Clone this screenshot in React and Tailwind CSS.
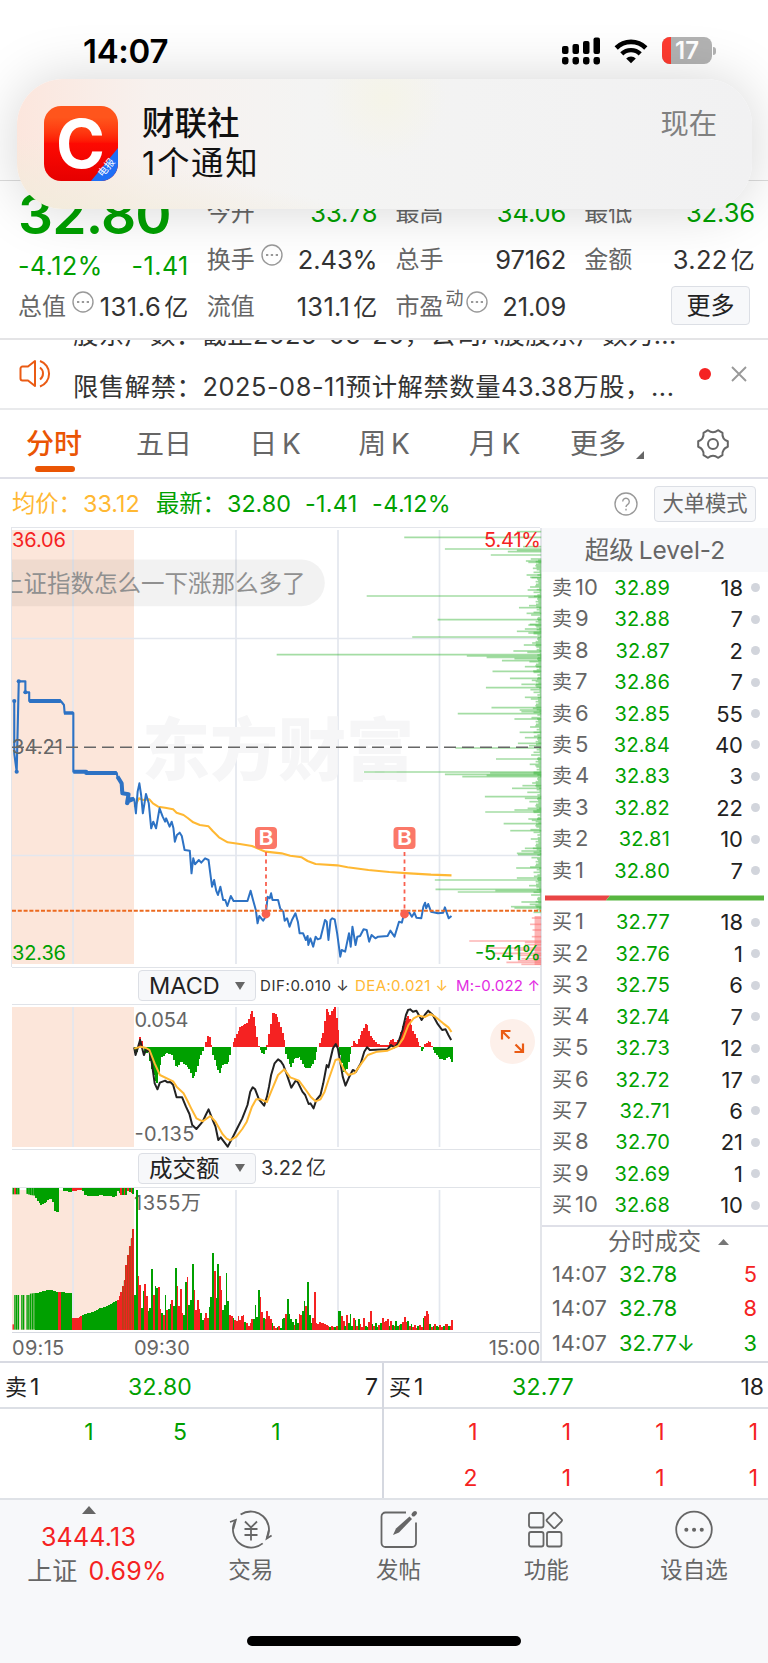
import clsx from 'clsx'

const tabs = [
  { label: '五日', width: 'w-[112px]' },
  { label: '日 K', width: 'w-[110px]' },
  { label: '周 K', width: 'w-[108px]' },
  { label: '月 K', width: 'w-[113px]' },
]

const sellOrders = [
  ['卖10', '32.89', 18],
  ['卖9', '32.88', 7],
  ['卖8', '32.87', 2],
  ['卖7', '32.86', 7],
  ['卖6', '32.85', 55],
  ['卖5', '32.84', 40],
  ['卖4', '32.83', 3],
  ['卖3', '32.82', 22],
  ['卖2', '32.81', 10],
  ['卖1', '32.80', 7],
]

const buyOrders = [
  ['买1', '32.77', 18],
  ['买2', '32.76', 1],
  ['买3', '32.75', 6],
  ['买4', '32.74', 7],
  ['买5', '32.73', 12],
  ['买6', '32.72', 17],
  ['买7', '32.71', 6],
  ['买8', '32.70', 21],
  ['买9', '32.69', 1],
  ['买10', '32.68', 10],
]

const trades = [
  { time: '14:07', price: '32.78', volume: 5, up: true },
  { time: '14:07', price: '32.78', volume: 8, up: true },
  { time: '14:07', price: '32.77↓', volume: 3, up: false },
]

// Series are stored in chart units; every chart group scales them down to pixels.
const UNIT_X = 2.877
const UNIT_Y = 3
const MINUTE = 4.88
const OPEN_X = 386

const auctionLine =
  '41,693 41,850 48,905 54,634 73,634 73,667 84,667 84,693 175,693 184,705 186,729 211,729 211,905 248,905 248,909 336,909 338,922 345,930 350,945 349,960 356,972 368,972 366,1000 370,985 386,985'

const priceLine =
  '386,985 391,1030 396,965 401,940 406,975 411,1030 420,972 428,1000 435,1075 441,1055 449,1075 459,1015 468,1040 475,1055 478,1045 488,1070 494,1055 499,1075 503,1115 509,1095 517,1088 523,1098 531,1140 546,1142 551,1210 556,1165 561,1183 572,1170 579,1178 590,1165 600,1170 605,1210 610,1250 616,1230 622,1262 627,1275 634,1250 642,1290 648,1290 654,1308 664,1278 672,1293 712,1293 721,1262 728,1290 736,1320 741,1360 746,1338 757,1352 764,1340 770,1280 776,1285 780,1270 784,1290 800,1290 806,1315 815,1325 819,1352 826,1345 833,1370 840,1350 850,1330 857,1355 862,1390 872,1390 880,1410 885,1398 887,1425 893,1405 901,1430 908,1400 914,1408 922,1405 935,1350 940,1355 945,1410 951,1350 956,1345 963,1348 970,1390 979,1460 983,1440 993,1445 1004,1390 1009,1430 1014,1370 1023,1425 1028,1400 1036,1398 1046,1378 1055,1380 1062,1415 1069,1395 1080,1405 1088,1400 1115,1398 1123,1382 1135,1400 1148,1355 1156,1358 1163,1330 1178,1328 1185,1340 1192,1328 1198,1343 1212,1345 1218,1310 1223,1298 1226,1315 1232,1302 1240,1325 1260,1330 1275,1328 1280,1312 1291,1345 1299,1338'

const averageLine =
  '387,1010 400,985 411,990 430,988 440,1000 455,1010 475,1013 498,1018 508,1028 528,1035 540,1044 556,1057 575,1065 600,1069 612,1083 630,1102 655,1117 690,1122 725,1128 764,1145 810,1150 835,1157 868,1162 885,1173 908,1182 970,1186 1000,1192 1060,1200 1120,1206 1178,1210 1240,1214 1299,1216'

const difLine =
  '386,262 390,285 397,262 403,240 414,285 420,270 430,275 437,310 445,370 453,388 460,368 475,362 482,367 490,366 498,374 508,412 524,412 535,440 545,462 553,495 565,507 583,485 592,465 600,448 612,480 620,500 628,540 635,532 655,560 668,535 680,510 697,475 712,435 720,395 727,382 734,388 745,418 760,437 768,410 774,380 780,345 790,310 800,298 808,304 815,315 824,340 838,383 850,363 856,365 870,395 878,405 888,432 893,430 902,445 910,420 922,405 930,370 940,315 945,322 958,265 966,252 972,265 978,300 986,350 994,377 1005,350 1015,330 1024,335 1038,310 1048,275 1056,262 1064,270 1115,268 1125,255 1135,262 1145,250 1158,210 1168,165 1174,150 1180,148 1188,155 1198,152 1213,180 1222,165 1232,152 1245,165 1258,190 1272,210 1282,208 1290,225 1298,240'

const deaLine =
  '386,266 405,260 420,264 430,270 445,310 460,345 498,364 508,380 528,400 540,424 550,445 565,475 583,484 605,468 620,485 640,522 652,536 662,541 680,530 697,507 710,485 725,440 737,418 750,418 768,426 780,395 800,345 818,328 835,352 860,362 880,390 895,412 908,424 922,418 934,395 945,360 965,300 975,297 990,330 1002,345 1020,340 1040,310 1058,285 1085,275 1115,272 1145,258 1160,235 1175,195 1190,175 1205,167 1222,171 1238,162 1252,170 1275,190 1290,202 1299,216'

const macdKeys = [
  [386, -10], [391, -25], [396, 5], [402, 33], [408, 18], [414, -5], [420, -25], [426, -5], [432, -40], [438, -70],
  [450, -115], [458, -70], [465, -30], [480, -17], [495, -22], [505, -55], [512, -60], [522, -40], [535, -55], [545, -65],
  [555, -95], [565, -70], [575, -30], [585, -8], [590, 5], [600, 42], [606, 15], [612, -20], [625, -65], [632, -76],
  [640, -52], [655, -50], [662, -20], [668, 10], [690, 60], [712, 75], [724, 112], [732, 80], [742, 15], [746, -3],
  [758, -22], [768, 2], [772, 30], [784, 107], [796, 97], [808, 60], [818, 20], [822, -20], [836, -62], [848, -32],
  [862, -30], [876, -60], [890, -64], [904, -45], [912, -5], [918, 8], [930, 45], [940, 118], [948, 95], [956, 112],
  [964, 120], [974, 50], [978, -20], [990, -82], [1000, -60], [1010, -8], [1016, 20], [1026, 8], [1040, 45], [1054, 74],
  [1066, 35], [1085, 12], [1095, 6], [1115, 8], [1128, 28], [1136, 12], [1150, 30], [1162, 75], [1175, 97], [1188, 50],
  [1200, 25], [1208, 3], [1214, -14], [1222, 8], [1234, 22], [1242, 3], [1250, -15], [1265, -35], [1280, -38], [1290, -28],
  [1305, -50],
]

// One entry per minute from the open, negative when the minute closed lower.
const volumes = [
  -103, -419, 162, 133, -65, -115, 137, 100, -55, -65, -183, 103, -130, -125, 127, 62, -50, 45, -104, 60, -62, -78, 90, -70,
  -184, 130, 72, 122, 50, -45, -142, 158, -75, -88, -197, 118, 60, 88, 62, -50, -30, 35, 50, 35, -67, -97, -231, 177, -95,
  -198, 160, 118, -58, -75, -170, -85, 44, 40, -36, 28, 25, 42, 28, 42, 44, -22, 20, 10, 20, 32, -33, -73, -37, -120, 98, 52,
  -35, 33, 55, 40, 32, -20, 12, 6, -8, 10, -5, -33, -34, 47, -93, -48, -32, -24, 14, -32, -20, 48, 44, -55, -86, 70, -144,
  -45, -20, 36, 114, 20, 17, 22, 20, 20, 18, 15, 10, -8, 11, 8, -8, 12, -57, -57, 42, 25, -12, 44, -20, -48, -12, 35, -30, 12,
  -33, 18, 8, 35, -12, -8, 24, 55, -18, 12, -20, -8, 14, -20, 36, 22, 26, 33, -10, 26, -14, 12, -26, -12, 14, -18, 24, 37, 22,
  -26, 12, -18, 8, 14, 6, -12, 14, 8, -34, 40, 57, 48, -16, 8, -12, 18, -12, -8, 14, 8, -12, 18, 16, -12, 10, 30, 6,
]

const depthBars = [
  [185, 1487], [202, 1163], [230, 1505], [237, 1280], [241, 1487], [245, 1461], [255, 1412], [273, 1513], [277, 1520],
  [315, 1515], [322, 1525], [360, 1518], [378, 1055], [382, 1520], [413, 1493], [430, 1515], [449, 1259], [465, 1520],
  [477, 1510], [484, 1487], [489, 1520], [501, 1186], [525, 1507], [543, 1477], [554, 796], [558, 1343], [562, 1400],
  [566, 1480], [572, 1444], [590, 1510], [604, 1417], [625, 1467], [643, 1500], [653, 1398], [682, 1510], [713, 1414],
  [720, 1495], [725, 1500], [731, 1317], [747, 1480], [787, 1495], [803, 1510], [820, 1490], [834, 1310], [867, 1427],
  [906, 1047], [909, 1410], [913, 1280], [916, 1400], [920, 1330], [947, 1503], [955, 1473], [980, 1395], [985, 1510],
  [1015, 1518], [1020, 1480], [1026, 1396], [1047, 1520], [1061, 1449], [1082, 1468], [1135, 1510], [1143, 1500],
  [1150, 1487], [1154, 1490], [1194, 1485], [1224, 1487], [1230, 1251], [1258, 1253], [1262, 1425], [1266, 1317],
  [1296, 1500], [1310, 1470], [1314, 1480],
]

const depthBarsBelow = [
  [1344, 1530], [1363, 1525], [1380, 1532], [1400, 1530], [1413, 1350], [1417, 1510], [1424, 1510], [1434, 1397],
  [1440, 1480], [1450, 1420], [1456, 1490], [1466, 1500], [1472, 1490], [1477, 1457], [1483, 1500],
]

function interpolate(keys, x) {
  const next = keys.findIndex(([kx]) => kx >= x)
  if (next <= 0) return keys[Math.max(next, 0)][1]
  const [x0, y0] = keys[next - 1]
  const [x1, y1] = keys[next]
  return y0 + ((y1 - y0) * (x - x0)) / (x1 - x0)
}

function ChartGroup({ top, children }) {
  return (
    <g transform={`scale(${1 / UNIT_X} ${1 / UNIT_Y}) translate(${-12 * UNIT_X} ${-top})`}>{children}</g>
  )
}

function Grid({ height, pad = 2 }) {
  return (
    <>
      <rect x="0" y={pad} width="122" height={height - pad * 2} fill="#fce6da" />
      {[61, 224, 326, 427.5].map((x) => (
        <path key={x} d={`M${x} ${pad}V${height - pad}`} stroke="#e3e7ee" strokeWidth="1.7" />
      ))}
    </>
  )
}

function Line({ points, color, width = 2 }) {
  return (
    <polyline
      points={points}
      fill="none"
      stroke={color}
      strokeWidth={width}
      strokeLinejoin="round"
      vectorEffect="non-scaling-stroke"
    />
  )
}

function BuyMarker({ x }) {
  return (
    <g>
      <path d={`M${x} 324V381`} stroke="#f9604f" strokeWidth="1.8" strokeDasharray="4 3.5" />
      <circle cx={x} cy="386" r="4.4" fill="#f9604f" />
      <rect x={x - 11} y="299" width="22" height="22" rx="4" fill="#fb7868" />
      <text x={x - 7.5} y="317.300" fontSize="20" fontWeight="600" fill="#fff" textLength="15" lengthAdjust="spacingAndGlyphs">
        B
      </text>
    </g>
  )
}

function PriceChart() {
  const noise = []
  for (let y = 267; y < 1328; y += 4) {
    const i = (y - 267) / 4
    const length = 2 + ((i * 37) % 15) + (i % 7 === 0 ? 18 : 0) + (i % 5 === 0 ? 10 : 0)
    noise.push(<path key={y} d={`M${1557 - length} ${y}H1557`} />)
  }

  return (
    <svg width="530" height="439" className="block">
      <Grid height={438} />
      <path d="M0 110.5H529M0 327.5H529" stroke="#e3e7ee" strokeWidth="1.7" />
      <text x="130" y="247" fontSize="68" fontWeight="900" fill="#f6f6f7">
        东方财富
      </text>
      <ChartGroup top={174}>
        <g stroke="#35b435" strokeOpacity="0.45" strokeWidth="5">
          {noise}
          {depthBars.map(([y, x]) => (
            <path key={y} d={`M${x} ${y}H1557`} />
          ))}
        </g>
        <g stroke="#fb6b6b" strokeOpacity="0.5" strokeWidth="5">
          {depthBarsBelow.map(([y, x]) => (
            <path key={y} d={`M${x} ${y}H1557`} />
          ))}
          <path d="M1547 1338V1485" strokeWidth="18" />
        </g>
        <Line points={averageLine} color="#ffb833" width={2.1} />
        <Line points={auctionLine} color="#2d72c4" width={2.1} />
        <Line points="84,693 175,693" color="#2d72c4" width={4} />
        <Line points="184,729 211,729" color="#2d72c4" width={3.5} />
        <Line points="211,905 248,905 248,909 336,909" color="#2d72c4" width={4} />
        <Line points="338,920 350,940 352,970 370,973 366,995 386,986" color="#2d72c4" width={4} />
        <g fill="#2d72c4">
          {[[41, 693], [48, 905], [54, 634], [73, 667], [366, 1000]].map(([x, y]) => (
            <ellipse key={x} cx={x} cy={y} rx="6" ry="6" />
          ))}
        </g>
        <Line points={priceLine} color="#2d72c4" />
      </ChartGroup>
      <path d="M0 219.3H529" stroke="#666" strokeWidth="1.5" strokeDasharray="12 6" />
      <path d="M0 382.7H529" stroke="#ec6a1f" strokeWidth="2" strokeDasharray="4 1.8" />
      <BuyMarker x={254} />
      <BuyMarker x={392.5} />
      <path d="M-100 31.5H289.500a23.3 23.3 0 0 1 0 46.7H-100Z" fill="#000" fillOpacity="0.05" />
      <text x="-12" y="64" fontSize="23.500" fill="#909090">
        上证指数怎么一下涨那么多了
      </text>
      <g fontSize="20">
        <text x="0" y="19" fill="#f52222" textLength="54">36.06</text>
        <text x="0" y="226" fill="#666" textLength="51">34.21</text>
        <text x="0" y="431.5" fill="#00a000" textLength="54">32.36</text>
        <text x="472" y="19" fill="#f52222" textLength="57">5.41%</text>
        <text x="463" y="431.5" fill="#00a000" textLength="66">-5.41%</text>
      </g>
    </svg>
  )
}

function MacdChart() {
  const bars = []
  for (let x = OPEN_X; x < 1302; x += MINUTE) {
    const value = interpolate(macdKeys, x + 2)
    bars.push(
      <rect
        key={x}
        x={x}
        y={value > 0 ? 262 - value : 262}
        width="5.1"
        height={Math.abs(value)}
        fill={value > 0 ? '#f52222' : '#00a000'}
      />,
    )
  }

  return (
    <svg width="530" height="144" className="block">
      <Grid height={144} />
      <ChartGroup top={135}>
        <g shapeRendering="crispEdges">{bars}</g>
        <Line points={difLine} color="#222" />
        <Line points={deaLine} color="#ffb833" />
      </ChartGroup>
      <g fontSize="20" fill="#666">
        <text x="122.5" y="21.5" textLength="54">0.054</text>
        <text x="122.5" y="136" textLength="60">-0.135</text>
      </g>
      <circle cx="500.5" cy="36.5" r="22.5" fill="#fdf0ea" />
      <g transform="translate(500.5 36.5)" stroke="#ea5b14" strokeWidth="2.2" fill="none">
        <path d="M-10.5 -2V-10.5H-2M-10 -10L-3 -3" />
        <path d="M10.5 2V10.5H2M10 10L3 3" />
      </g>
    </svg>
  )
}

function auctionBars() {
  const topKeys = [
    [74, 18], [85, 22], [98, 24], [108, 45], [118, 52], [130, 45], [140, 34], [150, 35], [154, 70], [166, 73],
    [167, 0], [180, 0], [181, 10], [200, 12], [235, 6], [240, 22], [260, 26], [290, 23], [330, 28], [336, 10],
    [345, 22], [360, 24], [366, 10], [384, 20],
  ]
  const baseKeys = [
    [85, 108], [110, 112], [140, 120], [165, 113], [205, 110], [206, 34], [225, 37], [236, 45], [270, 54], [290, 66],
    [310, 72], [322, 82], [335, 86], [345, 110], [356, 150], [363, 210], [372, 255], [384, 318],
  ]
  const bars = []
  for (let x = 36; x < 383; x += 5) {
    const red = (x > 203 && x < 232) || x > 333
    let top = x < 52 ? 20 : interpolate(topKeys, x)
    if (x > 54 && x < 74) top = 0
    let base = x < 85 ? 104 : interpolate(baseKeys, x)
    if (x === 36) base = 16
    if (x === 56 || x === 71) base = 0
    const topRed = x === 41 || (x > 205 && x < 232) || (x > 336 && x % 2 === 0)
    bars.push(
      <g key={x} shapeRendering={x > 100 ? 'crispEdges' : 'auto'}>
        <rect x={x} y="683" width="5" height={top} fill={topRed ? '#f52222' : '#00a000'} />
        <rect
          x={x}
          y={1109 - base}
          width={x < 100 ? 4 : 5.1}
          height={base}
          fill={red || x === 36 || x === 166 || x === 171 ? '#f52222' : '#00a000'}
        />
        {x > 350 ? (
          <rect x={x} y={1112 - base} width="1" height={base - 3} fill="#00a000" fillOpacity="0.7" shapeRendering="auto" />
        ) : null}
      </g>,
    )
  }
  return bars
}

function VolumeChart() {
  return (
    <svg width="530" height="144" className="block">
      <Grid height={144} />
      <text x="122" y="21.5" fontSize="20" fill="#666" textLength="67">
        1355万
      </text>
      <ChartGroup top={684}>
        {auctionBars()}
        <g shapeRendering="crispEdges">
          {volumes.slice(0, 188).map((value, i) => (
            <rect
              key={i}
              x={OPEN_X + i * MINUTE}
              y={1109 - Math.abs(value)}
              width="4.9"
              height={Math.abs(value)}
              fill={value > 0 ? '#f52222' : '#00a000'}
            />
          ))}
        </g>
      </ChartGroup>
    </svg>
  )
}

function MoreDots({ className }) {
  return (
    <svg width="22" height="22" viewBox="0 0 22 22" className={clsx('relative -top-[5px] shrink-0', className)}>
      <circle cx="11" cy="11" r="10" fill="none" stroke="#999" strokeWidth="1.4" />
      <path d="M5 10h2.3v2H5zM9.8 10h2.3v2H9.8zM14.7 10H17v2h-2.3z" fill="#999" />
    </svg>
  )
}

function Amount({ value, unit }) {
  return (
    <>
      {value}
      {unit ? <span className="ml-[3px] text-2xl leading-none">{unit}</span> : null}
    </>
  )
}

function Quote({ label, value, unit, green, dots, sup }) {
  return (
    <div className="flex h-[47.3px] items-center">
      <span className="-ml-px text-2xl leading-none text-[#666]">{label}</span>
      {sup ? <span className="relative -top-2 ml-0.5 text-lg leading-none text-[#666]">{sup}</span> : null}
      {dots ? <MoreDots className={sup ? 'ml-0.5' : 'ml-1.5'} /> : null}
      <span
        className={clsx(
          'ml-auto text-[25.5px] leading-none whitespace-nowrap',
          green ? 'text-[#00a000]' : 'text-[#333]',
          unit ? 'tracking-[0.3px]' : 'tracking-[-0.1px]',
        )}
      >
        <Amount value={value} unit={unit} />
      </span>
    </div>
  )
}

function StatusBar() {
  return (
    <div className="flex h-[79px] items-start pl-[83px] pr-[52px] pt-[34px]">
      <span className="text-[33px] leading-[35px] font-semibold tracking-[-0.3px] text-black">14:07</span>
      <svg width="40" height="28" viewBox="0 0 40 28" className="ml-auto mt-[3px]">
        <rect x="1" y="9" width="6.5" height="8" rx="2" />
        <rect x="11.5" y="7" width="6.5" height="10" rx="2" />
        <rect x="22" y="4" width="6.5" height="13" rx="2" />
        <rect x="32.5" y="0.5" width="6.5" height="16.5" rx="2" />
        <rect x="1" y="20" width="6.5" height="7.5" rx="2.4" />
        <rect x="11.5" y="20" width="6.5" height="7.5" rx="2.4" />
        <rect x="22" y="20" width="6.5" height="7.5" rx="2.4" />
        <rect x="32.5" y="20" width="6.5" height="7.5" rx="2.4" />
      </svg>
      <svg width="34" height="25" viewBox="0 0 34 25" className="ml-[13px] mt-[5px]">
        <path d="M2.2 9a21 21 0 0 1 29.6 0" fill="none" stroke="#000" strokeWidth="4.6" />
        <path d="M7.8 14.9a13 13 0 0 1 18.4 0" fill="none" stroke="#000" strokeWidth="4.4" />
        <path d="M17 24.2l-4.8-4.8a6.8 6.8 0 0 1 9.6 0z" />
      </svg>
      <div className="relative ml-[14px] mt-[3px] flex h-[27px] w-[50px] items-center justify-center overflow-hidden rounded-lg bg-[#b3b3b3]">
        <div className="absolute inset-y-0 left-0 w-[9px] bg-[#ff3b30]" />
        <span className="relative text-2xl leading-none font-semibold text-white">17</span>
      </div>
      <div className="ml-px mt-[13px] h-2 w-[3px] rounded-r-full bg-[#b3b3b3]" />
    </div>
  )
}

function Notification() {
  return (
    <div className="absolute left-[17px] top-[79px] z-10 flex h-[130px] w-[735px] items-start rounded-[46px] bg-[radial-gradient(circle_at_50%_15%,#f5f4e8_0,transparent_16%),linear-gradient(12deg,#f2ecdc_0%,transparent_26%),linear-gradient(to_right,#fce6dd_0%,#f7f1ee_18%,#f4f4f3_40%,#f1f1f2_100%)] shadow-[0_0_56px_rgba(0,0,0,0.17)]">
      <div className="relative ml-[27px] mt-[27px] h-[75px] w-[74px] overflow-hidden rounded-[17px] bg-linear-to-b from-[#ff551c] from-15% via-[#fd0a02] via-50% to-[#e60000]">
        <svg width="74" height="75" viewBox="0 0 74 75">
          <text x="12" y="61.500" fontSize="67" fontWeight="700" fill="#fff" textLength="49" lengthAdjust="spacingAndGlyphs">
            C
          </text>
          <path d="M74 42V75H47Z" fill="#1f6ff5" />
          <text x="0" y="0" fontSize="10" fill="#fff" transform="translate(58.500 71.500) rotate(-50)">
            电报
          </text>
        </svg>
      </div>
      <div className="ml-[24px] mt-[27px] text-[#111]">
        <p className="text-[32.5px] leading-[35px] font-medium">财联社</p>
        <p className="mt-[5px] text-[32.5px] leading-[36px] tracking-[1.7px]">1个通知</p>
      </div>
      <span className="ml-auto mr-[35px] mt-[30px] text-[28.3px] leading-[30px] text-[#808080]">现在</span>
    </div>
  )
}

function QuoteHeader() {
  return (
    <section className="h-[340px] overflow-hidden border-b-2 border-[#e4e4e6]">
      <StatusBar />
      <div className="h-[102px] border-b border-[#dcdcdc]" />
      <div className="grid grid-cols-4 gap-x-[19px] pl-[19px] pr-[13px] pt-[8px]">
        <div>
          <div className="-ml-px flex h-[51px] items-center text-[55px] leading-none font-semibold tracking-[-0.8px] text-[#00a000]">
            32.80
          </div>
          <div className="-ml-px flex h-[52px] items-center justify-between text-[25px] leading-none tracking-[0.5px] text-[#00a000]">
            <span>-4.12%</span>
            <span>-1.41</span>
          </div>
          <div className="flex h-[30px] items-center">
            <span className="-ml-px text-2xl leading-none text-[#666]">总值</span>
            <MoreDots className="ml-1.5" />
            <span className="ml-auto text-[25.5px] leading-none tracking-[0.5px] whitespace-nowrap text-[#333]">
              <Amount value="131.6" unit="亿" />
            </span>
          </div>
        </div>
        <div>
          <Quote label="今开" value="33.78" green />
          <Quote label="换手" value="2.43%" dots />
          <Quote label="流值" value="131.1" unit="亿" />
        </div>
        <div>
          <Quote label="最高" value="34.06" green />
          <Quote label="总手" value="97162" />
          <Quote label="市盈" value="21.09" sup="动" dots />
        </div>
        <div>
          <Quote label="最低" value="32.36" green />
          <Quote label="金额" value="3.22" unit="亿" />
          <div className="flex h-[44px] items-center justify-end pr-[5px]">
            <button className="h-[39px] w-[79px] rounded border border-[#dcdfe5] bg-[#f7f8fa] text-2xl leading-none text-[#222]">
              更多
            </button>
          </div>
        </div>
      </div>
    </section>
  )
}

function NewsTicker() {
  return (
    <section className="flex h-[70px] items-center overflow-hidden border-b-2 border-[#e9eaec]">
      <svg width="34" height="30" viewBox="0 0 34 30" className="ml-[19px] shrink-0" fill="none" stroke="#ea5b14" strokeWidth="2">
        <path d="M16 2v25l-7-5.500H3.500a2 2 0 0 1-2-2v-10a2 2 0 0 1 2-2H9z" strokeLinejoin="round" />
        <path d="M21 8.500a7.500 7.500 0 0 1 0 12M21 2a13.500 13.500 0 0 1 0 25.500" />
      </svg>
      <div className="ml-[20px] h-[68px] w-[610px] overflow-hidden text-[25.3px] text-[#333]">
        <p className="-mt-[18px] h-[52px] leading-[26px] tracking-[0.4px] whitespace-nowrap">股东户数：截止2025-06-20，公司A股股东户数为...</p>
        <p className="leading-[26px] tracking-[0.58px] whitespace-nowrap">限售解禁：2025-08-11预计解禁数量43.38万股，...</p>
      </div>
      <div className="ml-[16px] size-3 shrink-0 rounded-full bg-[#f52222]" />
      <svg width="16" height="16" viewBox="0 0 16 16" className="ml-[20px] shrink-0">
        <path d="M1 1l14 14M15 1L1 15" stroke="#999" strokeWidth="1.9" />
      </svg>
    </section>
  )
}

function TabBar() {
  return (
    <nav className="flex h-[69px] items-center border-b-2 border-[#dfe0e8] text-[28px] leading-none text-[#666]">
      <div className="relative w-[108px] text-center font-medium text-[#ea5504]">
        分时
        <div className="absolute left-[35px] top-[36px] h-[6px] w-[40px] rounded-full bg-[#ea5504]" />
      </div>
      {tabs.map((tab) => (
        <div key={tab.label} className={clsx('text-center [word-spacing:-3px]', tab.width)}>
          {tab.label}
        </div>
      ))}
      <div className="ml-[19px] flex items-end">
        更多
        <svg width="8" height="8" className="ml-[10px] mb-[-1px]">
          <path d="M8 0V8H0Z" fill="#666" />
        </svg>
      </div>
      <svg width="34" height="34" viewBox="0 0 34 34" className="ml-[52px]" fill="none" stroke="#666" strokeWidth="2">
        <path
          d="M12 3.200C15 5.600 19 5.600 22 3.200L26.500 5.800C26 9.800 28 12.800 31.800 14.300V19.700C28 21.200 26 24.200 26.500 28.200L22 30.800C19 28.400 15 28.400 12 30.800L7.500 28.200C8 24.200 6 21.200 2.200 19.700V14.300C6 12.800 8 9.800 7.500 5.800Z"
          strokeLinejoin="round"
        />
        <circle cx="17" cy="17" r="5" />
      </svg>
    </nav>
  )
}

function PriceSummary() {
  return (
    <div className="flex h-[49px] items-center pl-[12px] text-[23.3px] leading-none text-[#00a000]">
      <span className="w-[71px] text-[#ffb833]">均价：</span>
      <span className="w-[73px] text-[#ffb833]">33.12</span>
      <span className="w-[71px]">最新：</span>
      <span className="w-[78px]">32.80</span>
      <span className="w-[67px] tracking-[0.3px]">-1.41</span>
      <span className="tracking-[0.5px]">-4.12%</span>
      <svg width="24" height="24" viewBox="0 0 24 24" className="ml-auto" fill="none" stroke="#999" strokeWidth="1.4">
        <circle cx="12" cy="12" r="11" />
        <path d="M8.700 9.500a3.300 3.300 0 1 1 5.100 2.800c-1.300.8-1.800 1.300-1.800 2.700M12 16.800v1.700" />
      </svg>
      <button className="ml-[16px] mr-[12px] h-[36px] w-[102px] rounded border border-[#dcdfe5] bg-[#f7f8fa] text-[21.3px] leading-none text-[#666]">
        大单模式
      </button>
    </div>
  )
}

function IndicatorSelect({ label }) {
  return (
    <button className="flex h-[31px] w-[118px] shrink-0 items-center rounded border border-[#dcdfe5] bg-[#f7f8fa] pl-[10px] text-[23.5px] leading-none text-[#222]">
      {label}
      <svg width="10" height="8" className="ml-auto mr-[10px]">
        <path d="M0 0H10L5 8Z" fill="#666" />
      </svg>
    </button>
  )
}

function Charts() {
  return (
    <div className="flex w-[542px] flex-col border-r-2 border-[#e3e5ea] pl-[12px]">
      <div className="-mt-px -ml-px border-t border-l border-[#e3e5ea]">
        <PriceChart />
      </div>
      <div className="flex h-[38px] items-center border-y border-[#e0e3e8] pl-[126px] text-[15px] leading-none whitespace-nowrap">
        <IndicatorSelect label="MACD" />
        <span className="ml-[4px] w-[95px] shrink-0 tracking-[0.6px] text-[#333]">DIF:0.010 ↓</span>
        <span className="w-[101px] shrink-0 tracking-[0.4px] text-[#ffb833]">DEA:0.021 ↓</span>
        <span className="tracking-[0.2px] text-[#e22be2]">M:-0.022 ↑</span>
      </div>
      <MacdChart />
      <div className="flex h-[40px] items-center border-y border-[#e0e3e8] pl-[126px]">
        <IndicatorSelect label="成交额" />
        <span className="ml-[5px] text-xl leading-none text-[#333]">
          3.22<span className="ml-[3px]">亿</span>
        </span>
      </div>
      <VolumeChart />
      <div className="flex h-[29px] items-center border-t border-[#d5d8e0] pt-px text-xl leading-none text-[#666]">
        <span className="w-[122px] tracking-[0.3px]">09:15</span>
        <span>09:30</span>
        <span className="ml-auto">15:00</span>
      </div>
    </div>
  )
}

function OrderRows({ orders }) {
  return orders.map(([label, price, volume]) => (
    <div key={label} className="flex h-[31.46px] items-center leading-none">
      <span className="w-[50px] text-[#666]">
        <span className="text-xl">{label[0]}</span>
        <span className="ml-[3px] text-[22px]">{label.slice(1)}</span>
      </span>
      <span className="w-[68px] text-right text-xl tracking-[0.2px] text-[#00a000]">{price}</span>
      <span className="w-[73px] text-right text-[22px] text-[#222]">{volume}</span>
      <span className="ml-2 size-[9px] rounded-full bg-[#d2d5dc]" />
    </div>
  ))
}

function OrderBook() {
  return (
    <div className="flex-1">
      <div className="flex h-[44px] items-center justify-center bg-[#f7f8fa] text-[24.5px] leading-none text-[#666] [word-spacing:-2px]">
        超级 Level-2
      </div>
      <div className="pl-[10px]">
        <OrderRows orders={sellOrders} />
      </div>
      <svg width="226" height="20" className="block">
        <path d="M3 8.500H68L64 13.500H3Z" fill="#e94545" />
        <path d="M68 8.500H222V13.500H64Z" fill="#57b540" />
      </svg>
      <div className="pl-[10px]">
        <OrderRows orders={buyOrders} />
      </div>
      <div className="mt-[4px] border-t-2 border-[#dfe0e8] pl-[10px]">
        <div className="flex h-[30px] items-center justify-center pl-[17px] text-[23.3px] leading-none text-[#666]">
          分时成交
          <svg width="11" height="6" className="ml-[17px]">
            <path d="M0 6L5.500 0L11 6Z" fill="#777" />
          </svg>
        </div>
        {trades.map((trade, i) => (
          <div key={i} className="flex h-[34.700px] items-center text-[21.800px] leading-none">
            <span className="w-[67px] text-[#666]">{trade.time}</span>
            <span className="text-[#00a000]">{trade.price}</span>
            <span className={clsx('ml-auto mr-[11px]', trade.up ? 'text-[#f52222]' : 'text-[#00a000]')}>
              {trade.volume}
            </span>
          </div>
        ))}
      </div>
    </div>
  )
}

function QueueSide({ label, price, volume, counts, red }) {
  return (
    <div className={clsx(red ? 'flex-1 border-l-2 border-[#d5d8e0]' : 'w-[382px]')}>
      <div className="flex h-[46px] items-center border-b-2 border-[#dcdfe5] pr-[4px] pl-[5px] pt-[5px] text-[22px] leading-none text-[#222]">
        <span className="w-[123px]">
          {label[0]}
          <span className="ml-[3px] text-[23px]">{label[1]}</span>
        </span>
        <span className="text-[23px] tracking-[0.2px] text-[#00a000]">{price}</span>
        <span className="ml-auto text-[23px]">{volume}</span>
      </div>
      <div
        className={clsx(
          'grid w-[374px] grid-cols-4 text-right text-[23px] leading-[46px]',
          red ? 'text-[#f52222]' : 'text-[#00a000]',
        )}
      >
        {counts.map((count, i) => (
          <span key={i}>{count}</span>
        ))}
      </div>
    </div>
  )
}

function NavItem({ label, children }) {
  return (
    <div className="flex w-[147.7px] flex-col items-center pt-[9px]">
      <svg width="44" height="42" viewBox="0 0 44 42" fill="none" stroke="#666" strokeWidth="1.8">
        {children}
      </svg>
      <span className="mt-[7px] text-[22.500px] leading-6 text-[#666]">{label}</span>
    </div>
  )
}

function BottomNav() {
  return (
    <footer className="relative flex h-[165px] border-t-2 border-[#dfe2e7] bg-[#f7f8fa]">
      <div className="flex w-[177px] flex-col items-center text-[#f52222]">
        <svg width="14" height="8" className="mt-[6px]">
          <path d="M0 8L7 0L14 8Z" fill="#666" />
        </svg>
        <span className="mt-[11px] text-[25px] leading-[24px] tracking-[0.2px]">3444.13</span>
        <div className="mt-[10px] flex items-center gap-[11px] pl-[17px] text-[25px] leading-[25px]">
          <span className="text-[#666]">上证</span>
          <span className="tracking-[0.2px]">0.69%</span>
        </div>
      </div>
      <NavItem label="交易">
        <path d="M11.600 5.600A18.200 18.200 0 0 1 37.700 29.500M33.700 34.400A18.200 18.200 0 0 1 6.300 11.400" />
        <path d="M1 13L6.800 11L4.300 20M42.600 26.500L37.700 29.500L39.900 21" />
        <path d="M16 12.500L22 18.500L28 12.500M15.500 20H28.500M15.500 26H28.500M22 18.500V31.500" />
      </NavItem>
      <NavItem label="发帖">
        <path d="M29 3.500H8.500a4 4 0 0 0-4 4V34a4 4 0 0 0 4 4H35a4 4 0 0 0 4-4V13.500" />
        <path d="M16 26L19 19.500L32.500 7.500L35 10L22 23.500Z" fill="#666" stroke="none" />
        <path d="M36.500 5.500L38 4" strokeWidth="4" strokeLinecap="round" />
      </NavItem>
      <NavItem label="功能">
        <rect x="5" y="4" width="14.500" height="14.500" rx="2" />
        <rect x="5" y="23" width="14.500" height="14.500" rx="2" />
        <rect x="23" y="23" width="14.500" height="14.500" rx="2" />
        <rect x="24.500" y="5.500" width="11.700" height="11.700" rx="1.500" transform="rotate(45 30.300 11.300)" />
      </NavItem>
      <NavItem label="设自选">
        <circle cx="22" cy="20.500" r="17.800" />
        <path d="M14.300 20.700h.1M22 20.700h.1M29.700 20.700h.1" strokeWidth="4" strokeLinecap="round" />
      </NavItem>
      <div className="absolute bottom-[17px] left-[247px] h-[10px] w-[274px] rounded-full bg-black" />
    </footer>
  )
}

export default function App() {
  return (
    <div className="relative h-[1663px] w-[768px] overflow-hidden bg-white font-['Inter','Noto_Sans_CJK_SC',sans-serif]">
      <Notification />
      <QuoteHeader />
      <NewsTicker />
      <TabBar />
      <PriceSummary />
      <div className="flex h-[835px] border-b-2 border-[#d8dae2]">
        <Charts />
        <OrderBook />
      </div>
      <div className="flex h-[135px]">
        <QueueSide label="卖1" price="32.80" volume={7} counts={[1, 5, 1]} />
        <QueueSide label="买1" price="32.77" volume={18} counts={[1, 1, 1, 1, 2, 1, 1, 1]} red />
      </div>
      <BottomNav />
    </div>
  )
}
